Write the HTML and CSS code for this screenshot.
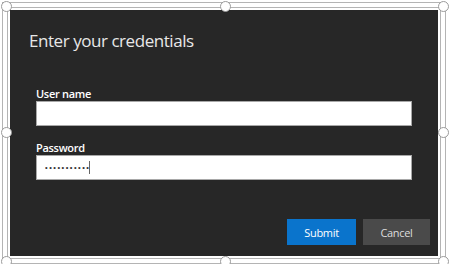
FILE: index.html
```html
<!DOCTYPE html>
<html lang="en">
<head>
  <meta charset="UTF-8" />
  <meta name="viewport" content="width=device-width, initial-scale=1" />
  <title>Enter your credentials</title>
  <link rel="stylesheet" href="styles.css">
</head>
<body>
  <div class="frame">
    <div class="frame-inner">
      <form class="dialog" id="loginForm">
        <h1 class="title">Enter your credentials</h1>
        <div class="fields">
          <div class="form-group">
            <label for="userName">User name</label>
            <input type="text" id="userName" name="userName">
          </div>
          <div class="form-group">
            <label for="password">Password</label>
            <div class="input-wrap">
              <input type="password" id="password" name="password" value="secretpass1">
              <span class="caret"></span>
            </div>
          </div>
        </div>
        <div class="actions">
          <button type="submit" class="btn btn-primary">Submit</button>
          <button type="button" class="btn btn-secondary">Cancel</button>
        </div>
      </form>
    </div>

    <!-- selection handles -->
    <span class="handle h-tl"></span>
    <span class="handle h-tc"></span>
    <span class="handle h-tr"></span>
    <span class="handle h-ml"></span>
    <span class="handle h-mr"></span>
    <span class="handle h-bl"></span>
    <span class="handle h-bc"></span>
    <span class="handle h-br"></span>
  </div>
</body>
</html>
```

FILE: styles.css
```css
/* Credentials dialog inside a selection frame */
body {
  margin: 0;
  padding: 0;
  background-color: #fff;
  font-family: 'Open Sans', 'Noto Sans', sans-serif;
}

.frame {
  position: relative;
  margin: 2px 0 0 2px;
  width: 444px;
  height: 262px;
  box-sizing: border-box;
  border: 1px solid #b4b4b4;
  padding: 4px;
  background: #fff;
}

.frame-inner {
  border: 1px solid #b4b4b4;
  padding: 2px;
  height: 100%;
  box-sizing: border-box;
}

.dialog {
  display: flex;
  flex-direction: column;
  height: 100%;
  box-sizing: border-box;
  background-color: #272727;
  padding: 19px 0 11px;
  margin: 0;
}

.title {
  margin: 0;
  padding: 0 19px;
  font-size: 17px;
  font-weight: 400;
  line-height: 24px;
  letter-spacing: -0.45px;
  color: #e8e8e8;
}

.fields {
  padding: 0 26px;
  margin-top: 33px;
}

.form-group {
  margin-bottom: 14px;
}

label {
  display: block;
  font-size: 11px;
  font-weight: 600;
  line-height: 15px;
  color: #fff;
  letter-spacing: -0.3px;
}

input[type="text"],
input[type="password"] {
  display: block;
  width: 100%;
  height: 25px;
  box-sizing: border-box;
  margin: 0;
  padding: 0 8px;
  border: 1px solid #a8a8a8;
  background-color: #fff;
  color: #333;
  outline: none;
}

input[type="password"] {
  font-size: 7.5px;
  letter-spacing: 1.5px;
}

.input-wrap {
  position: relative;
}

.caret {
  position: absolute;
  left: 53px;
  top: 6px;
  width: 1px;
  height: 13px;
  background-color: #666;
}

.actions {
  display: flex;
  justify-content: flex-end;
  gap: 7px;
  margin-top: auto;
  padding-right: 8px;
}

.btn {
  height: 26px;
  border: none;
  padding: 0;
  font-family: inherit;
  font-size: 11px;
  letter-spacing: -0.3px;
  cursor: pointer;
}

.btn-primary {
  width: 69px;
  background-color: #0a74cc;
  color: #fff;
}

.btn-secondary {
  width: 67px;
  background-color: #4a4a4a;
  color: #ddd;
}

/* Selection Handles */
.handle {
  position: absolute;
  width: 9px;
  height: 9px;
  border: 1.5px solid #9a9a9a;
  border-radius: 50%;
  background: #fff;
}

.h-tl { left: -2px;  top: -2px; }
.h-tc { left: 217px; top: -2px; }
.h-tr { left: 435px; top: -2px; }
.h-ml { left: -2px;  top: 124px; }
.h-mr { left: 435px; top: 124px; }
.h-bl { left: -2px;  top: 253px; }
.h-bc { left: 217px; top: 253px; }
.h-br { left: 435px; top: 253px; }
```
